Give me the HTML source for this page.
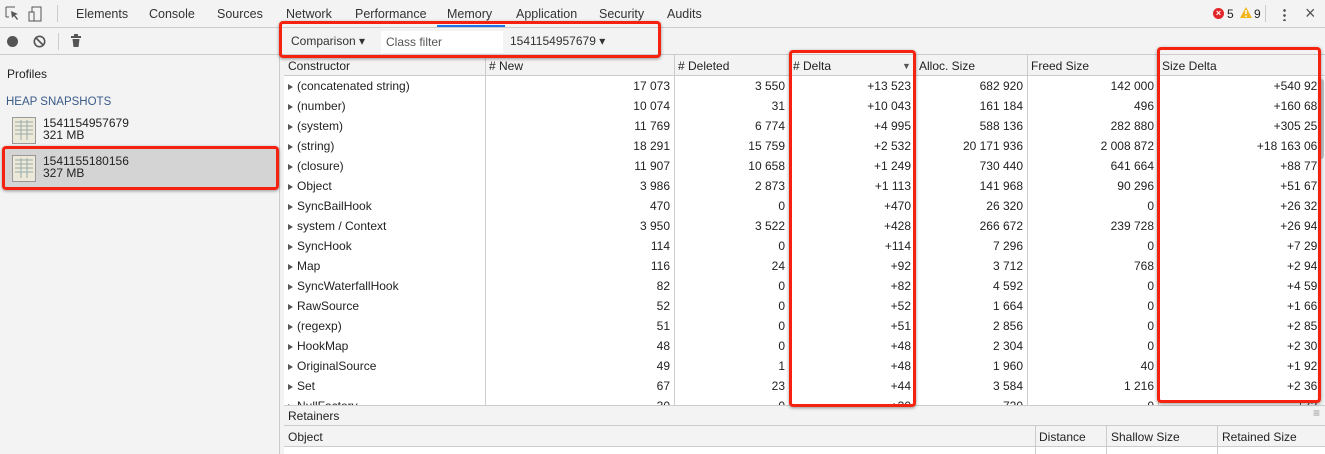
<!DOCTYPE html>
<html><head><style>
*{box-sizing:border-box;margin:0;padding:0}
body{width:1325px;height:454px;overflow:hidden;font-family:"Liberation Sans",Arial,sans-serif;font-size:12px;color:#222;background:#f3f3f3;position:relative}
.a{position:absolute}
.tabs{left:0;top:0;width:1325px;height:28px;background:#f3f3f3;border-bottom:1px solid #ccc}
.tab{position:absolute;top:7px;font-size:12.5px;color:#333}
.tb{left:0;top:28px;width:1325px;height:27px;background:#f3f3f3;border-bottom:1px solid #ccc}
.grid{left:284px;top:55px;width:1041px;height:350px;background:#fff;overflow:hidden}
.hdr{position:absolute;left:0;top:0;width:1041px;height:21px;background:#f3f3f3;border-bottom:1px solid #ccc}
.vl{position:absolute;top:0;width:1px;height:350px;background:#ccc}
.h{position:absolute;top:4px;font-size:12px}
.row{position:absolute;left:0;width:1041px;height:20px;line-height:20px}
.c{position:absolute;top:0;text-align:right;white-space:nowrap}
.n{position:absolute;left:4px;white-space:nowrap}
.n:before{content:"";display:inline-block;border-left:5px solid #555;border-top:3.5px solid transparent;border-bottom:3.5px solid transparent;margin-right:4px;vertical-align:0}
.red{position:absolute;border:3px solid #f5220f;border-radius:4px;box-shadow:0 1px 3px rgba(0,0,0,.4)}
</style></head><body>
<div class="a tabs">
<svg class="a" style="left:5px;top:6px" width="40" height="17"><path d="M1 1h9M1 1v10M1 11h3" stroke="#555" fill="none"/><path d="M6 5l7 3-3 1 3 4-1 1-3-4-2 2z" fill="#555"/><rect x="27" y="1" width="9" height="14" stroke="#555" fill="none"/><rect x="24" y="6" width="5" height="9" stroke="#555" fill="#f3f3f3"/></svg>
<div class="a" style="left:57px;top:5px;width:1px;height:17px;background:#ccc"></div>
<span class="tab" style="left:76px">Elements</span>
<span class="tab" style="left:149px">Console</span>
<span class="tab" style="left:217px">Sources</span>
<span class="tab" style="left:286px">Network</span>
<span class="tab" style="left:355px">Performance</span>
<span class="tab" style="left:447px">Memory</span>
<span class="tab" style="left:516px">Application</span>
<span class="tab" style="left:599px">Security</span>
<span class="tab" style="left:667px">Audits</span>
<div class="a" style="left:437px;top:25px;width:68px;height:2px;background:#1a73e8"></div>
<div class="a" style="left:1213px;top:8px;width:11px;height:11px;border-radius:50%;background:#e3262a;color:#fff;font-size:9px;line-height:11px;text-align:center;font-weight:bold">×</div>
<span class="a" style="left:1227px;top:7px">5</span>
<svg class="a" style="left:1240px;top:7px" width="12" height="12"><path d="M6 0L12 11H0z" fill="#f3b51c"/><path d="M6 3v4M6 8.5v1.5" stroke="#fff" stroke-width="1.5"/></svg>
<span class="a" style="left:1254px;top:7px">9</span>
<div class="a" style="left:1265px;top:5px;width:1px;height:17px;background:#ccc"></div>
<div class="a" style="left:1283px;top:8px;width:3px;height:13px;background:radial-gradient(circle,#555 1.2px,transparent 1.5px) 0 0/3px 5px"></div>
<span class="a" style="left:1305px;top:3px;font-size:18px;color:#555">×</span>
</div>
<div class="a tb">
<div class="a" style="left:7px;top:8px;width:11px;height:11px;border-radius:50%;background:#555"></div>
<svg class="a" style="left:33px;top:7px" width="13" height="13"><circle cx="6.5" cy="6.5" r="5.2" stroke="#555" stroke-width="1.6" fill="none"/><path d="M3 3l7 7" stroke="#555" stroke-width="1.6"/></svg>
<div class="a" style="left:58px;top:5px;width:1px;height:17px;background:#ccc"></div>
<svg class="a" style="left:70px;top:6px" width="12" height="14"><rect x="1" y="2" width="10" height="2" fill="#555"/><rect x="4" y="0" width="4" height="2" fill="#555"/><path d="M2.5 5h7l-1 8h-5z" fill="#555"/></svg>
<span class="a" style="left:291px;top:6px;color:#333">Comparison ▾</span>
<div class="a" style="left:381px;top:3px;width:122px;height:22px;background:#fff"></div>
<span class="a" style="left:386px;top:7px;color:#555">Class filter</span>
<span class="a" style="left:510px;top:6px;color:#333">1541154957679 ▾</span>
</div>
<div class="a" style="left:280px;top:55px;width:4px;height:399px;background:#f3f3f3"></div>
<div class="a" style="left:279px;top:55px;width:1px;height:399px;background:#ccc"></div>
<span class="a" style="left:7px;top:67px">Profiles</span>
<span class="a" style="left:6px;top:96px;color:#3a5a88;font-size:11.5px">HEAP SNAPSHOTS</span>
<div class="a" style="left:4px;top:148px;width:272px;height:40px;background:#d4d4d4"></div>
<svg class="a" style="left:12px;top:117px" width="24" height="27"><rect x="0.5" y="0.5" width="23" height="26" fill="#ece9d8" stroke="#999"/><path d="M3 5h18M3 9h18M3 13h18M3 17h18M9 3v20M15 3v20" stroke="#9aa" /></svg>
<span class="a" style="left:43px;top:117px;line-height:12px">1541154957679<br>321 MB</span>
<svg class="a" style="left:12px;top:155px" width="24" height="27"><rect x="0.5" y="0.5" width="23" height="26" fill="#ece9d8" stroke="#999"/><path d="M3 5h18M3 9h18M3 13h18M3 17h18M9 3v20M15 3v20" stroke="#9aa" /></svg>
<span class="a" style="left:43px;top:155px;line-height:12px">1541155180156<br>327 MB</span>

<div class="a grid">
<div class="hdr"></div>
<div class="vl" style="left:201px"></div><div class="vl" style="left:390px"></div><div class="vl" style="left:505px"></div><div class="vl" style="left:631px"></div><div class="vl" style="left:743px"></div><div class="vl" style="left:874px"></div>
<span class="h" style="left:4px">Constructor</span><span class="h" style="left:205px"># New</span><span class="h" style="left:394px"># Deleted</span><span class="h" style="left:509px"># Delta</span><span class="h" style="left:618px;font-size:9px;top:6px;color:#555">▼</span><span class="h" style="left:635px">Alloc. Size</span><span class="h" style="left:747px">Freed Size</span><span class="h" style="left:878px">Size Delta</span>
<div class="a" style="left:1033px;top:22px;width:8px;height:328px;background:#f3f3f3"></div>
<div class="a" style="left:1034px;top:24px;width:6px;height:80px;border-radius:3px;background:#c1c1c1"></div>
<div id="rows"></div>
</div>
<div class="a" style="left:284px;top:405px;width:1041px;height:21px;background:#f3f3f3;border-top:1px solid #ccc;border-bottom:1px solid #ccc"></div>
<span class="a" style="left:288px;top:409px">Retainers</span>
<span class="a" style="left:1313px;top:406px;color:#999">≡</span>
<div class="a" style="left:284px;top:426px;width:1041px;height:21px;background:#f3f3f3;border-bottom:1px solid #ccc"></div>
<div class="a" style="left:284px;top:447px;width:1041px;height:7px;background:#fff"></div>
<span class="a" style="left:288px;top:430px">Object</span>
<div class="a" style="left:1035px;top:426px;width:1px;height:28px;background:#ccc"></div>
<span class="a" style="left:1039px;top:430px">Distance</span>
<div class="a" style="left:1106px;top:426px;width:1px;height:28px;background:#ccc"></div>
<span class="a" style="left:1111px;top:430px">Shallow Size</span>
<div class="a" style="left:1217px;top:426px;width:1px;height:28px;background:#ccc"></div>
<span class="a" style="left:1222px;top:430px">Retained Size</span>

<div class="red" style="left:279px;top:21px;width:382px;height:37px"></div>
<div class="red" style="left:789px;top:50px;width:127px;height:357px"></div>
<div class="red" style="left:1157px;top:47px;width:164px;height:356px"></div>
<div class="red" style="left:2px;top:146px;width:277px;height:44px"></div>
<script>
var d=[["(concatenated string)","17 073","3 550","+13 523","682 920","142 000","+540 924"],["(number)","10 074","31","+10 043","161 184","496","+160 688"],["(system)","11 769","6 774","+4 995","588 136","282 880","+305 256"],["(string)","18 291","15 759","+2 532","20 171 936","2 008 872","+18 163 064"],["(closure)","11 907","10 658","+1 249","730 440","641 664","+88 776"],["Object","3 986","2 873","+1 113","141 968","90 296","+51 672"],["SyncBailHook","470","0","+470","26 320","0","+26 320"],["system / Context","3 950","3 522","+428","266 672","239 728","+26 944"],["SyncHook","114","0","+114","7 296","0","+7 296"],["Map","116","24","+92","3 712","768","+2 944"],["SyncWaterfallHook","82","0","+82","4 592","0","+4 592"],["RawSource","52","0","+52","1 664","0","+1 664"],["(regexp)","51","0","+51","2 856","0","+2 856"],["HookMap","48","0","+48","2 304","0","+2 304"],["OriginalSource","49","1","+48","1 960","40","+1 920"],["Set","67","23","+44","3 584","1 216","+2 368"],["NullFactory","30","0","+30","720","0","+720"]];
var rt=[386,501,627,739,870],h="";
d.forEach(function(r,i){h+='<div class="row" style="top:'+(21+20*i)+'px"><span class="n">'+r[0]+'</span>';
for(var j=0;j<5;j++)h+='<span class="c" style="right:'+(1041-rt[j])+'px">'+r[j+1]+'</span>';
h+='<div class="c" style="left:875px;width:158px;overflow:hidden;height:20px"><span style="position:absolute;right:-7px">'+r[6]+'</span></div></div>';});
document.getElementById("rows").innerHTML=h;
</script>
</body></html>
